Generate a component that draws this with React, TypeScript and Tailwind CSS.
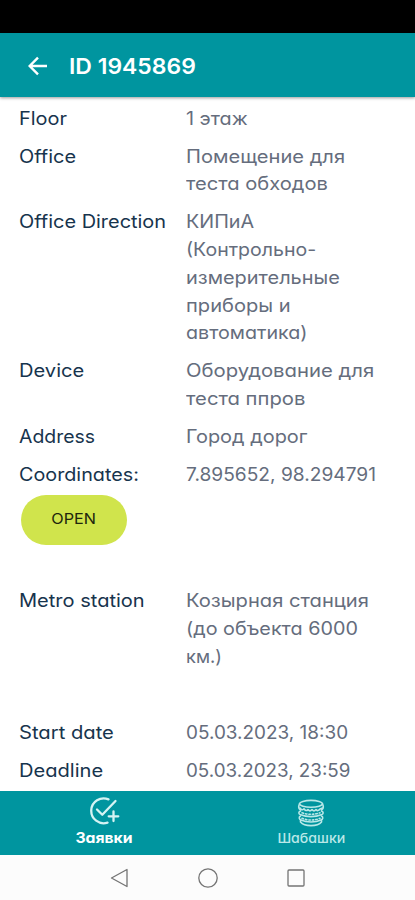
import React from "react";

type Line = { text: string; cls?: string };
type Row = { label: Line; value: Line[]; cls?: string; action?: string };

const rows: Row[] = [
  { label: { text: "Floor", cls: "scale-x-[1.09]" }, value: [{ text: "1 этаж", cls: "scale-x-[1.08]" }] },
  {
    label: { text: "Office", cls: "scale-x-[1.09]" },
    value: [
      { text: "Помещение для", cls: "scale-x-[1.1]" },
      { text: "теста обходов", cls: "scale-x-[1.1]" },
    ],
  },
  {
    label: { text: "Office Direction", cls: "scale-x-[1.09]" },
    value: [
      { text: "КИПиА", cls: "scale-x-[1.08]" },
      { text: "(Контрольно-", cls: "scale-x-[1.068]" },
      { text: "измерительные", cls: "scale-x-[1.09]" },
      { text: "приборы и", cls: "scale-x-[1.1]" },
      { text: "автоматика)", cls: "scale-x-[1.076]" },
    ],
  },
  {
    label: { text: "Device", cls: "scale-x-[1.1]" },
    value: [
      { text: "Оборудование для", cls: "scale-x-[1.11]" },
      { text: "теста ппров", cls: "scale-x-[1.107]" },
    ],
  },
  { label: { text: "Address", cls: "scale-x-[1.063]" }, value: [{ text: "Город дорог", cls: "scale-x-[1.09]" }] },
  {
    label: { text: "Coordinates:", cls: "scale-x-[1.081]" },
    value: [{ text: "7.895652, 98.294791", cls: "scale-x-[1.047]" }],
    cls: "h-[126px]",
    action: "OPEN",
  },
  {
    label: { text: "Metro station", cls: "scale-x-[1.096]" },
    value: [
      { text: "Козырная станция", cls: "scale-x-[1.102]" },
      { text: "(до объекта 6000", cls: "scale-x-[1.082]" },
      { text: "км.)" },
    ],
    cls: "h-[131.5px]",
  },
  { label: { text: "Start date", cls: "scale-x-[1.105]" }, value: [{ text: "05.03.2023, 18:30", cls: "scale-x-[1.035]" }] },
  { label: { text: "Deadline", cls: "scale-x-[1.1]" }, value: [{ text: "05.03.2023, 23:59", cls: "scale-x-[1.028]" }] },
];

function DetailRow({ row }: { row: Row }) {
  return (
    <div className={`flex shrink-0 pb-[10.4px] ${row.cls ?? ""}`}>
      <div className="w-[167px] shrink-0 text-[#17344d]">
        <div className={`w-max origin-left whitespace-nowrap ${row.label.cls ?? ""}`}>{row.label.text}</div>
        {row.action && (
          <button className="mt-[6.5px] ml-[2px] flex h-[50px] w-[106px] items-center justify-center rounded-full bg-[#d0e44c] pb-1 text-[15px] text-[#20260c]">
            <span className="scale-x-[1.08]">{row.action}</span>
          </button>
        )}
      </div>
      <div className="text-[#656d7d]">
        {row.value.map((l) => (
          <div key={l.text} className={`w-max origin-left whitespace-nowrap ${l.cls ?? ""}`}>
            {l.text}
          </div>
        ))}
      </div>
    </div>
  );
}

function TaskIcon() {
  return (
    <svg width="32" height="30" viewBox="0 0 32 30" fill="none" stroke="#d5f3f3" strokeWidth="2.3" strokeLinecap="round" strokeLinejoin="round">
      <path d="M20.5 3.4A12.4 12.4 0 1 0 19.5 26.6" />
      <path d="M9 13.500l5.300 5.300L27.500 5" />
      <path d="M25.500 15.500v9.600M20.700 20.300h9.600" />
    </svg>
  );
}

function BurgerIcon() {
  return (
    <svg width="28" height="28" viewBox="0 0 28 28" fill="none" stroke="#b9e8e8" strokeWidth="1.6" strokeLinecap="round" strokeLinejoin="round">
      <ellipse cx="14" cy="4.8" rx="11.5" ry="3.4" />
      <path d="M2.500 5C1 8 2 10 3.500 11M25.500 5C27 8 26 10 24.500 11" />
      <path d="M3 9q2 3 4 .8q2 3 4 .8q2 2.500 4 0q2 2.500 4 0q2 2.200 4-.5l2.500-1" />
      <path d="M3.500 12c-2.500 1-2 3 .2 3.800c6 2.400 14.600 2.400 20.600 0c2.200-.8 2.700-2.800.2-3.800" />
      <path d="M5 13.800q9 3 18 0" strokeDasharray="1.500 2" />
      <path d="M3.500 17c-2 1.200-1.500 3 .5 4c5.500 2.600 14.500 2.600 20 0c2-1 2.500-2.800.5-4" />
      <path d="M5 19.300q9 3.500 18 0" strokeDasharray="1.500 2" />
      <path d="M3.500 21.500v1.500c4 4.800 17 4.800 21 0v-1.500" />
    </svg>
  );
}

export default function App() {
  return (
    <div className="flex h-[900px] w-[415px] flex-col overflow-hidden bg-white font-['Inter','Noto_Sans',sans-serif] text-[18.3px] leading-[27.7px] [font-feature-settings:'cv11']">
      <div className="h-[33px] shrink-0 bg-black" />
      <header className="z-10 flex h-[64px] shrink-0 items-center bg-[#00959f] pl-[28px] text-white shadow-[0_1px_3px_rgba(0,0,0,0.4)]">
        <svg width="20" height="20" viewBox="0 0 20 20" fill="none" stroke="white" strokeWidth="2.4" className="mt-px">
          <path d="M19 10H2M10 1.700L1.700 10L10 18.300" />
        </svg>
        <h1 className="mt-[3px] ml-[21px] origin-left scale-x-[1.043] text-[22px] font-semibold whitespace-nowrap">ID 1945869</h1>
      </header>
      <main className="flex min-h-0 flex-1 flex-col overflow-hidden pt-[7.6px] pl-[19px]">
        {rows.map((row) => (
          <DetailRow key={row.label.text} row={row} />
        ))}
      </main>
      <nav className="grid h-[64px] shrink-0 grid-cols-2 bg-[#00959f]">
        <div className="flex flex-col items-center pt-[5px]">
          <TaskIcon />
          <span className="scale-x-[1.1] text-[14.3px] leading-[24px] font-bold text-white">Заявки</span>
        </div>
        <div className="flex flex-col items-center pt-[8px]">
          <BurgerIcon />
          <span className="scale-x-[1.05] text-[13.5px] leading-[22px] font-medium text-[#b9e8e8]">Шабашки</span>
        </div>
      </nav>
      <footer className="flex h-[45px] shrink-0 items-center bg-[#fcfcfc] pl-[110px]">
        <svg width="200" height="22" viewBox="0 0 200 22" fill="none" stroke="#747474" strokeWidth="1.3" strokeLinejoin="round">
          <path d="M1.500 11L17 2.500V19.500Z" />
          <circle cx="98" cy="11" r="9.200" />
          <rect x="178" y="3" width="16" height="16" rx="1" />
        </svg>
      </footer>
    </div>
  );
}
